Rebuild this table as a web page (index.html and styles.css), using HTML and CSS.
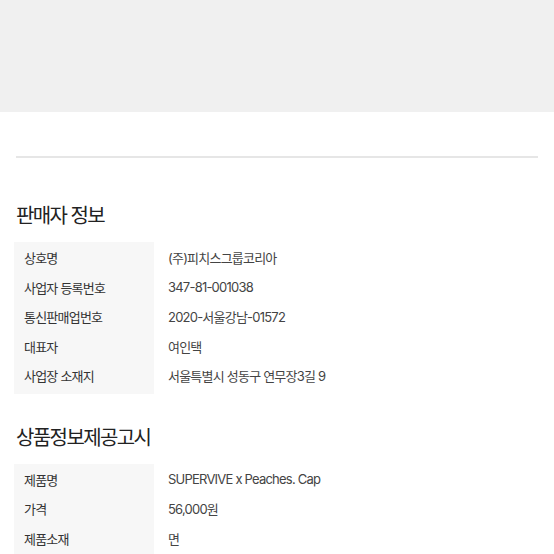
FILE: index.html
```html
<!DOCTYPE html>
<html lang="ko">
<head>
  <meta charset="UTF-8">
  <meta name="viewport" content="width=device-width, initial-scale=1.0">
  <title>판매자 정보</title>
  <link rel="stylesheet" href="styles.css">
</head>
<body>
  <div class="top-area"></div>

  <div class="content">
    <hr class="divider">

    <section class="info-section">
      <h2>판매자 정보</h2>
      <table class="info-table">
        <tr><th>상호명</th><td>(주)피치스그룹코리아</td></tr>
        <tr><th>사업자 등록번호</th><td>347-81-001038</td></tr>
        <tr><th>통신판매업번호</th><td>2020-서울강남-01572</td></tr>
        <tr><th>대표자</th><td>여인택</td></tr>
        <tr><th>사업장 소재지</th><td>서울특별시 성동구 연무장3길 9</td></tr>
      </table>
    </section>

    <section class="info-section">
      <h2>상품정보제공고시</h2>
      <table class="info-table">
        <tr><th>제품명</th><td>SUPERVIVE x Peaches. Cap</td></tr>
        <tr><th>가격</th><td>56,000원</td></tr>
        <tr><th>제품소재</th><td>면</td></tr>
      </table>
    </section>
  </div>
</body>
</html>
```

FILE: styles.css
```css
body {
  margin: 0;
  font-family: Inter, "Noto Sans CJK KR", sans-serif;
  color: #333;
  background: #fff;
}
.top-area {
  height: 112px;
  background-color: #f0f0f0;
}
.content {
  padding: 0 16px;
}
.divider {
  border: none;
  border-top: 2px solid #e6e6e6;
  margin: 44px 0 0;
}
.info-section h2 {
  margin: 0;
  font-size: 20px;
  font-weight: 400;
  letter-spacing: -0.08em;
  color: #222;
  line-height: 26px;
}
.info-section:nth-of-type(1) h2 {
  margin-top: 45px;
}
.info-section:nth-of-type(2) h2 {
  margin-top: 31px;
}
.info-table {
  width: calc(100% + 2px);
  margin: 13px 0 0 -2px;
  border-collapse: collapse;
  font-size: 13px;
  letter-spacing: -0.06em;
}
.info-table th,
.info-table td {
  height: 29.5px;
  padding: 0;
  text-align: left;
  font-weight: 400;
  vertical-align: middle;
}
.info-table th {
  width: 130px;
  padding-left: 10px;
  background-color: #f7f7f7;
  color: #333;
}
.info-table td {
  padding-left: 14px;
  color: #444;
}
.info-table tr:first-child th,
.info-table tr:first-child td {
  padding-top: 1px;
}
.info-table tr:last-child th,
.info-table tr:last-child td {
  padding-bottom: 3px;
}
```
